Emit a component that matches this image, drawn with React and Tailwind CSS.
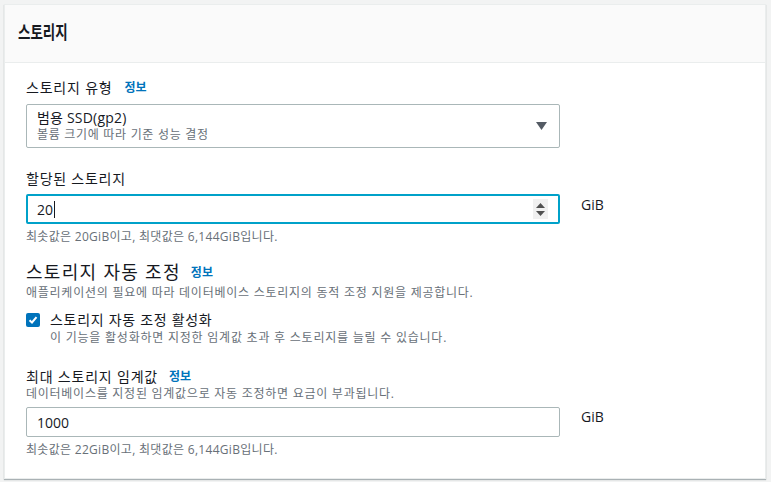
import React from "react";

const font = { fontFamily: '"Open Sans", "Noto Sans CJK KR", sans-serif' };

function Info({ className = "" }) {
  return <span className={`text-[12px] font-bold text-[#0073bb] ${className}`}>정보</span>;
}

function Hint({ children, className = "" }) {
  return <p className={`text-[12px] leading-[16px] text-[#687078] ${className}`}>{children}</p>;
}

export default function App() {
  return (
    <div className="min-h-[482px] bg-[#f2f3f3] pt-[4px] pl-[4px] pr-[5px] pb-[5px]" style={font}>
      <div className="bg-white border border-[#eaeded] shadow-[0_1px_1px_0_rgba(0,28,36,0.3)] text-[#16191f]">
        {/* Header */}
        <div className="h-[58px] bg-[#fafafa] border-b border-[#eaeded] flex items-center px-[13px] pb-[4px]">
          <h2 className="text-[18px] font-bold leading-[24px] inline-block scale-x-75 origin-left">스토리지</h2>
        </div>

        {/* Body */}
        <div className="px-[21px] pt-[14px] pb-[20px]">
          {/* Storage type */}
          <div className="flex items-center gap-[12px] h-[20px] text-[14px]">
            <span className="tracking-[0.8px]">스토리지 유형</span>
            <Info className="mt-[1px]" />
          </div>
          <div className="mt-[7px] w-[534px] h-[44px] border border-[#aab7b8] rounded-[2px] flex items-center justify-between pl-[10px] pr-[12px]">
            <div className="flex flex-col">
              <span className="text-[14px] leading-[18px] tracking-[0.2px]">범용 SSD(gp2)</span>
              <span className="text-[12px] leading-[16px] text-[#687078] tracking-[0.7px]">볼륨 크기에 따라 기준 성능 결정</span>
            </div>
            <svg width="11" height="8" viewBox="0 0 11 8">
              <path d="M0 0 L11 0 L5.5 8 Z" fill="#545b64" />
            </svg>
          </div>

          {/* Allocated storage */}
          <div className="mt-[20px] h-[20px] text-[14px] flex items-center tracking-[0.75px]">할당된 스토리지</div>
          <div className="mt-[6px] flex items-start gap-[21px]">
            <div className="w-[534px] h-[30px] border-2 border-[#00a1c9] rounded-[2px] flex items-center justify-between pl-[9px] pr-[10px]">
              <span className="text-[14px] flex items-center">
                20<span className="inline-block w-[1px] h-[17px] bg-[#16191f] ml-[1px]" />
              </span>
              <div className="w-[15px] h-[20px] bg-[#f0f0f0] flex flex-col items-center justify-center gap-[3px]">
                <svg width="9" height="5" viewBox="0 0 9 5"><path d="M0 5 L9 5 L4.5 0 Z" fill="#505050" /></svg>
                <svg width="9" height="5" viewBox="0 0 9 5"><path d="M0 0 L9 0 L4.5 5 Z" fill="#505050" /></svg>
              </div>
            </div>
            <span className="text-[14px] leading-[20px] pt-[1px]">GiB</span>
          </div>
          <Hint className="mt-[5px] tracking-[0.3px]">최솟값은 20GiB이고, 최댓값은 6,144GiB입니다.</Hint>

          {/* Autoscaling */}
          <div className="mt-[15px] flex items-center gap-[10px] h-[24px]">
            <span className="text-[18px] leading-[24px] tracking-[1.3px]">스토리지 자동 조정</span>
            <Info className="mt-[2px]" />
          </div>
          <Hint className="mt-[1px] tracking-[0.75px]">애플리케이션의 필요에 따라 데이터베이스 스토리지의 동적 조정 지원을 제공합니다.</Hint>
          <div className="mt-[9px] flex items-start gap-[10px]">
            <div className="mt-[3px] w-[14px] h-[14px] rounded-[2px] bg-[#0073bb] flex items-center justify-center">
              <svg width="10" height="10" viewBox="0 0 10 10">
                <path d="M1.5 5.2 L4 7.5 L8.5 2.2" stroke="white" strokeWidth="2" fill="none" />
              </svg>
            </div>
            <div className="flex flex-col">
              <span className="text-[14px] leading-[20px] tracking-[0.7px]">스토리지 자동 조정 활성화</span>
              <Hint className="tracking-[0.77px]">이 기능을 활성화하면 지정한 임계값 초과 후 스토리지를 늘릴 수 있습니다.</Hint>
            </div>
          </div>

          {/* Max threshold */}
          <div className="mt-[20px] flex items-center gap-[11px] h-[20px] text-[14px]">
            <span className="tracking-[0.8px]">최대 스토리지 임계값</span>
            <Info className="mt-[1px]" />
          </div>
          <Hint className="tracking-[0.74px]">데이터베이스를 지정된 임계값으로 자동 조정하면 요금이 부과됩니다.</Hint>
          <div className="mt-[5px] flex items-start gap-[21px]">
            <div className="w-[534px] h-[30px] border border-[#aab7b8] rounded-[2px] flex items-center pl-[10px]">
              <span className="text-[14px]">1000</span>
            </div>
            <span className="text-[14px] leading-[20px]">GiB</span>
          </div>
          <Hint className="mt-[5px] tracking-[0.3px]">최솟값은 22GiB이고, 최댓값은 6,144GiB입니다.</Hint>
        </div>
      </div>
    </div>
  );
}
